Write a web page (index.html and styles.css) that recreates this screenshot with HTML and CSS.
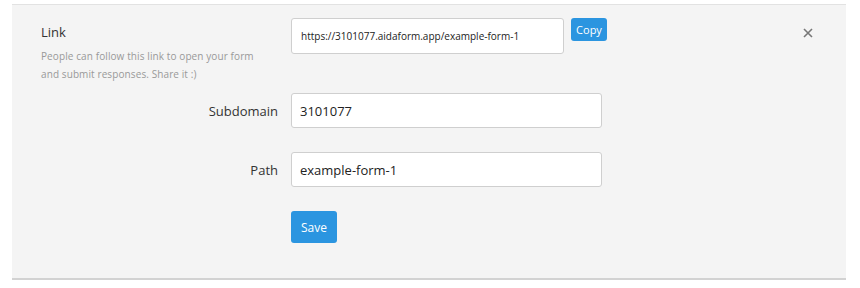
FILE: index.html
```html
<!DOCTYPE html>
<html>
<head>
<meta charset="utf-8">
<link rel="stylesheet" href="styles.css">
</head>
<body>
<div class="panel">
  <div class="row top">
    <div class="intro">
      <div class="title">Link</div>
      <div class="desc">People can follow this link to open your form<br>and submit responses. Share it :)</div>
    </div>
    <div class="linkbox">
      <div class="input url">https://3101077.aidaform.app/example-form-1</div>
      <button class="btn copy">Copy</button>
    </div>
    <div class="close">
      <svg width="10" height="10" viewBox="0 0 10 10"><path d="M1 1L9 9M9 1L1 9" stroke="#777" stroke-width="1.6" fill="none"/></svg>
    </div>
  </div>
  <div class="row field">
    <div class="label">Subdomain</div>
    <div class="input wide">3101077</div>
  </div>
  <div class="row field">
    <div class="label">Path</div>
    <div class="input wide">example-form-1</div>
  </div>
  <div class="row actions">
    <div class="label"></div>
    <button class="btn save">Save</button>
  </div>
</div>
</body>
</html>
```
FILE: styles.css
```css
html, body { margin: 0; padding: 0; background: #fff; }
body { font-family: "Open Sans", "Noto Sans", sans-serif; color: #333; }
.panel {
  margin: 4px 14px 0 12px;
  background: #f4f4f4;
  border-top: 1px solid #e2e2e2;
  border-bottom: 2px solid #d2d2d2;
  padding: 13px 28px 34px 29px;
  height: 226px;
  box-sizing: content-box;
}
.row { display: flex; }
.top { align-items: flex-start; }
.intro { width: 250px; flex: none; padding-top: 5px; }
.title { font-size: 13px; line-height: 18px; color: #333; }
.desc { font-size: 10px; letter-spacing: 0.1px; line-height: 18px; color: #999; margin-top: 6px; }
.linkbox { display: flex; align-items: flex-start; gap: 7px; }
.input {
  background: #fff;
  border: 1px solid #cfcfcf;
  border-radius: 3px;
  box-sizing: border-box;
  display: flex;
  align-items: center;
  padding: 0 9px;
  color: #222;
}
.url { width: 273px; height: 36px; font-size: 10px; }
.btn {
  background: #2b95e0;
  color: #fff;
  border: none;
  border-radius: 3px;
  font-family: inherit;
  cursor: pointer;
  padding: 0;
}
.copy { width: 36px; height: 23px; font-size: 11px; }
.close { margin-left: auto; padding-top: 10px; width: 20px; display: flex; justify-content: center; }
.field { align-items: center; margin-top: 10px; }
.field + .field { margin-top: 24px; }
.label { width: 237px; margin-right: 13px; text-align: right; font-size: 13px; flex: none; }
.wide { width: 311px; height: 35px; font-size: 13px; padding: 0 8px; }
.actions { margin-top: 24px; }
.save { width: 46px; height: 32px; font-size: 12px; }
```
